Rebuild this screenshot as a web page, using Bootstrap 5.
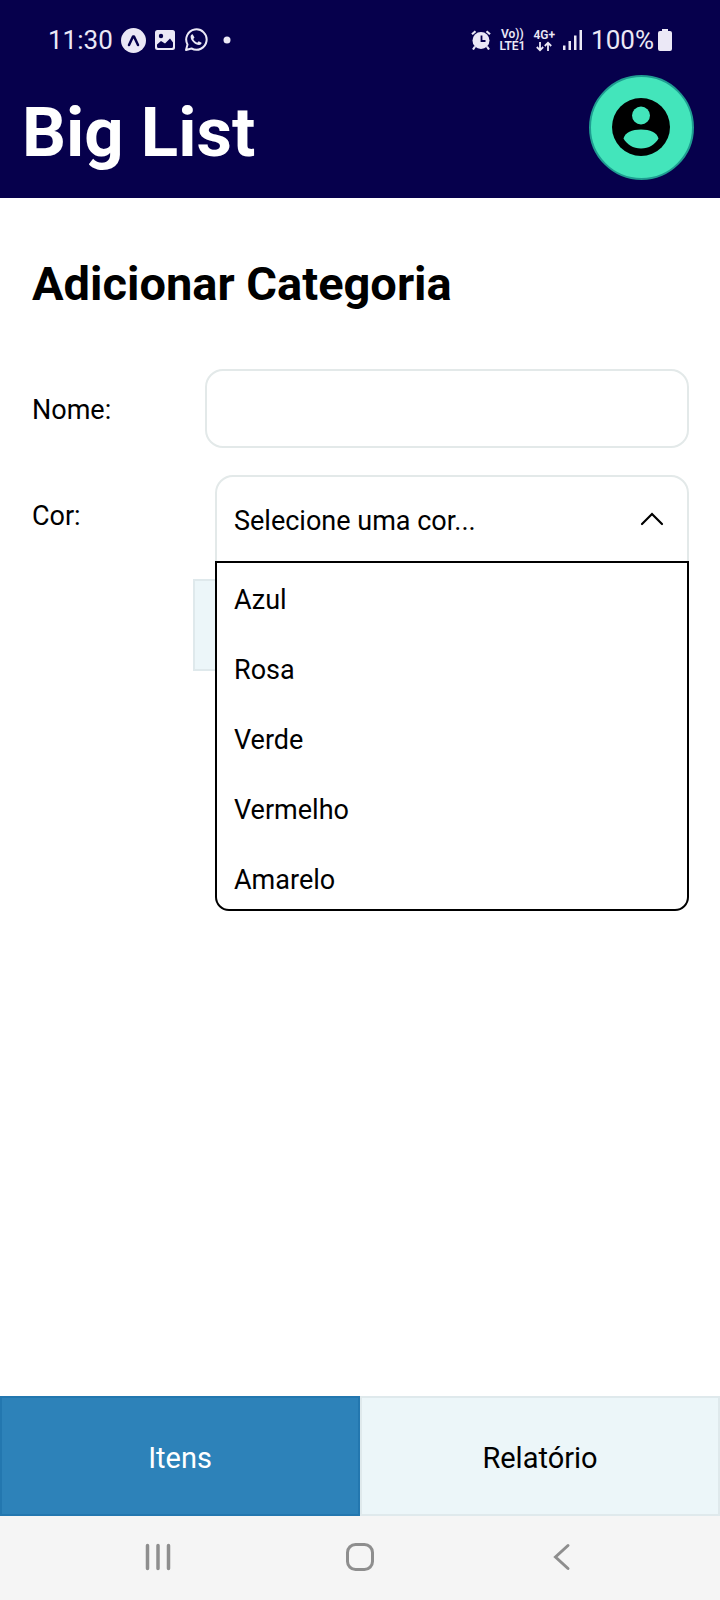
<!DOCTYPE html>
<html lang="pt-BR">
<head>
<meta charset="utf-8">
<meta name="viewport" content="width=device-width, initial-scale=1">
<title>Big List</title>
<link rel="stylesheet" href="https://cdn.jsdelivr.net/npm/bootstrap@5.3.0/dist/css/bootstrap.min.css">
<style>
  :root { --navy: #06004c; --line: #e3e9e9; --pale: #ecf6f9; --blue: #2d82b9; }
  body { font-family: Roboto, "Liberation Sans", sans-serif; font-size: 27px; line-height: 40px; color: #000; background: #fff; }
  svg { display: block; flex: none; }
  .app-header { background: var(--navy); padding-bottom: 16px; }
  .status-bar { height: 80px; padding: 0 48px; font-size: 26px; color: #ebe8f6; }
  .status-icons { margin-left: 8px; gap: 9px; }
  .tiny { font-size: 12px; line-height: 12px; font-weight: 600; }
  .title-row { height: 102px; padding: 0 26px 0 22px; }
  .app-title { font-size: 69px; line-height: 80px; font-weight: 700; padding-top: 4px; }
  .avatar { width: 105px; height: 105px; margin-top: -8px; background: #43e5bb; border: 2px solid #1f9d91; }
  .page { padding: 56px 31px 32px 32px; }
  .page-title { font-size: 47px; line-height: 60px; font-weight: 700; margin-bottom: 55px; }
  .field-label { width: 173px; padding-top: 2px; }
  .field-box, .field-box:focus { border: 2px solid var(--line); border-radius: 18px; font-size: 27px; color: #000; background-color: #fff; box-shadow: none; }
  .name-box { height: 79px; }
  .color-row { margin-top: 27px; }
  .picker { margin-left: 10px; }
  .picker .field-box { height: 88px; padding: 4px 56px 0 17px; background-image: none; border-radius: 18px 18px 0 0; }
  .chevron { position: absolute; right: 25px; top: 37px; pointer-events: none; }
  .color-menu { position: absolute; top: 86px; left: 0; right: 0; z-index: 5; height: 350px; padding: 2px 0 0; overflow: hidden; border: 2px solid #000; border-radius: 0 0 14px 14px; background: #fff; }
  .color-menu button { height: 70px; padding: 0 17px; font-size: 27px; color: #000; }
  .add-btn { width: 336px; height: 92px; margin-top: 16px; font-size: 27px; background: var(--pale); border: 2px solid #dfe9ec; }
  .tab-btn { height: 120px; padding-top: 12px; font-size: 29px; background: var(--pale); border: 2px solid #dfe9ec; color: #000; }
  .tab-btn.chosen { background: var(--blue); border-color: #2377af; color: #fff; }
  .system-nav { height: 84px; padding: 0 57px 2px; background: #f5f5f5; }
</style>
</head>
<body class="d-flex flex-column min-vh-100">

<header class="app-header">
  <div class="status-bar d-flex align-items-center justify-content-between">
    <div class="d-flex align-items-center">
      <span>11:30</span>
      <div class="status-icons d-flex align-items-center">
        <svg width="25" height="25" viewBox="0 0 25 25"><circle cx="12.500" cy="12.500" r="12.500" fill="#ebe8f6"/><path d="M8 17 12 8.500h1L17 17" fill="none" stroke="#06004c" stroke-width="2.500" stroke-linejoin="round" stroke-linecap="round"/></svg>
        <svg width="20" height="20" viewBox="0 0 20 20"><rect width="20" height="20" rx="2.500" fill="#ebe8f6"/><circle cx="6" cy="6" r="2.200" fill="#06004c"/><path d="M2 16.500v-2l4-3.500 4 2.500 5-5 3 4v4q0 1.500-1.500 1.500h-13Q2 18 2 16.500z" fill="#06004c"/></svg>
        <svg width="24" height="24" viewBox="0 0 24 24" fill="none" stroke="#ebe8f6"><path d="M2 22l1.500-5.500A10.200 10.200 0 1 1 7.500 20.500z" stroke-width="2" stroke-linejoin="round"/><path d="M8.600 6.300c-.7-.2-2 .7-2 2.400 0 3.800 4.700 8.300 8.400 8.300 1.600 0 2.700-1.200 2.600-2.300l-2.900-1.500-1.500 1.500c-1.600-.6-3.300-2.200-3.900-3.700L10.500 9.400z" fill="#ebe8f6" stroke="none"/></svg>
        <svg width="24" height="8" viewBox="0 0 24 8"><circle cx="10" cy="4" r="3.500" fill="#ebe8f6"/></svg>
      </div>
    </div>
    <div class="d-flex align-items-center">
      <svg width="20" height="20" viewBox="0 0 20 20"><circle cx="10" cy="10.500" r="8.500" fill="#ebe8f6"/><path d="M10.500 5.500v5.500h4" fill="none" stroke="#06004c" stroke-width="1.800"/><path d="M1 4.300 4.500 1.200M19 4.300 15.500 1.200M4 16.500l-2 3M16 16.500l2 3" stroke="#ebe8f6" stroke-width="2.200"/></svg>
      <div class="tiny ms-2 text-center"><div>Vo))</div><div>LTE1</div></div>
      <div class="tiny ms-2 d-flex flex-column align-items-center"><div>4G+</div>
        <svg width="16" height="11" viewBox="0 0 16 11" fill="none" stroke="#ebe8f6" stroke-width="1.800"><path d="M4 1v8M.8 6 4 9.300 7.200 6M12 10V2M8.800 5 12 1.700 15.200 5"/></svg>
      </div>
      <svg class="ms-2" width="20" height="20" viewBox="0 0 20 20" fill="#ebe8f6"><path d="M0 15.500h2.500V20H0zM5.500 11H8v9H5.500zM11 5.500h2.500V20H11zM16.500 0H19v20h-2.500z"/></svg>
      <span class="ms-2">100%</span>
      <svg class="ms-1" width="14" height="22" viewBox="0 0 14 22"><path d="M4 0h6v2h2q2 0 2 2v16q0 2-2 2H2q-2 0-2-2V4q0-2 2-2h2z" fill="#ebe8f6"/></svg>
    </div>
  </div>
  <div class="title-row d-flex align-items-center justify-content-between">
    <h1 class="app-title text-white mb-0">Big List</h1>
    <button type="button" class="avatar btn rounded-circle p-0 d-flex align-items-center justify-content-center" aria-label="Perfil">
      <svg width="59" height="58" viewBox="0 0 59 58"><circle cx="29" cy="29" r="29" fill="#000"/><circle cx="29" cy="17.500" r="9" fill="#43e5bb"/><path d="M11.500 40.500C13 34.500 20 31.500 29 31.500S45 34.500 46.500 40.500C43 46.500 37 50.500 29 50.500S15 46.500 11.500 40.500z" fill="#43e5bb"/></svg>
    </button>
  </div>
</header>

<main class="page flex-grow-1">
  <h2 class="page-title">Adicionar Categoria</h2>
  <form>
    <div class="d-flex align-items-center">
      <label class="field-label flex-shrink-0" for="nome">Nome:</label>
      <input id="nome" type="text" class="name-box field-box form-control">
    </div>
    <div class="color-row d-flex align-items-center">
      <label class="field-label flex-shrink-0 pb-2" for="cor">Cor:</label>
      <div class="picker position-relative flex-grow-1">
        <select id="cor" class="field-box form-select">
          <option>Selecione uma cor...</option>
          <option>Azul</option><option>Rosa</option><option>Verde</option><option>Vermelho</option><option>Amarelo</option>
        </select>
        <svg class="chevron" width="24" height="14" viewBox="0 0 24 14" fill="none" stroke="#000" stroke-width="2.200" stroke-linecap="round"><path d="M2 12 12 2l10 10"/></svg>
        <div class="color-menu">
          <button type="button" class="dropdown-item">Azul</button>
          <button type="button" class="dropdown-item">Rosa</button>
          <button type="button" class="dropdown-item">Verde</button>
          <button type="button" class="dropdown-item">Vermelho</button>
          <button type="button" class="dropdown-item">Amarelo</button>
        </div>
      </div>
    </div>
    <button type="submit" class="add-btn btn rounded-0 d-block mx-auto" aria-label="Adicionar"></button>
  </form>
</main>

<footer>
  <nav class="d-flex">
    <button type="button" class="tab-btn chosen btn rounded-0 w-50">Itens</button>
    <button type="button" class="tab-btn btn rounded-0 w-50">Relatório</button>
  </nav>
  <div class="system-nav d-flex align-items-center justify-content-around">
    <button type="button" class="btn p-0 border-0" aria-label="Recentes"><svg width="28" height="28" viewBox="0 0 28 28" stroke="#8e8e8e" stroke-width="3.500" stroke-linecap="round"><path d="M3.500 2.500v23M14 2.500v23M24.500 2.500v23"/></svg></button>
    <button type="button" class="btn p-0 border-0" aria-label="Início"><svg width="28" height="28" viewBox="0 0 28 28"><rect x="1.500" y="1.500" width="25" height="25" rx="8" fill="none" stroke="#8e8e8e" stroke-width="3"/></svg></button>
    <button type="button" class="btn p-0 border-0" aria-label="Voltar"><svg width="28" height="28" viewBox="0 0 28 28" fill="none" stroke="#8e8e8e" stroke-width="3" stroke-linecap="round"><path d="M20 2.500 7.500 14 20 25.500"/></svg></button>
  </div>
</footer>

<script src="https://cdn.jsdelivr.net/npm/bootstrap@5.3.0/dist/js/bootstrap.bundle.min.js"></script>
<script>
  const colorSelect = document.getElementById('cor');
  document.querySelectorAll('.color-menu button').forEach(item => {
    item.addEventListener('click', () => { colorSelect.value = item.textContent; });
  });
</script>
</body>
</html>
